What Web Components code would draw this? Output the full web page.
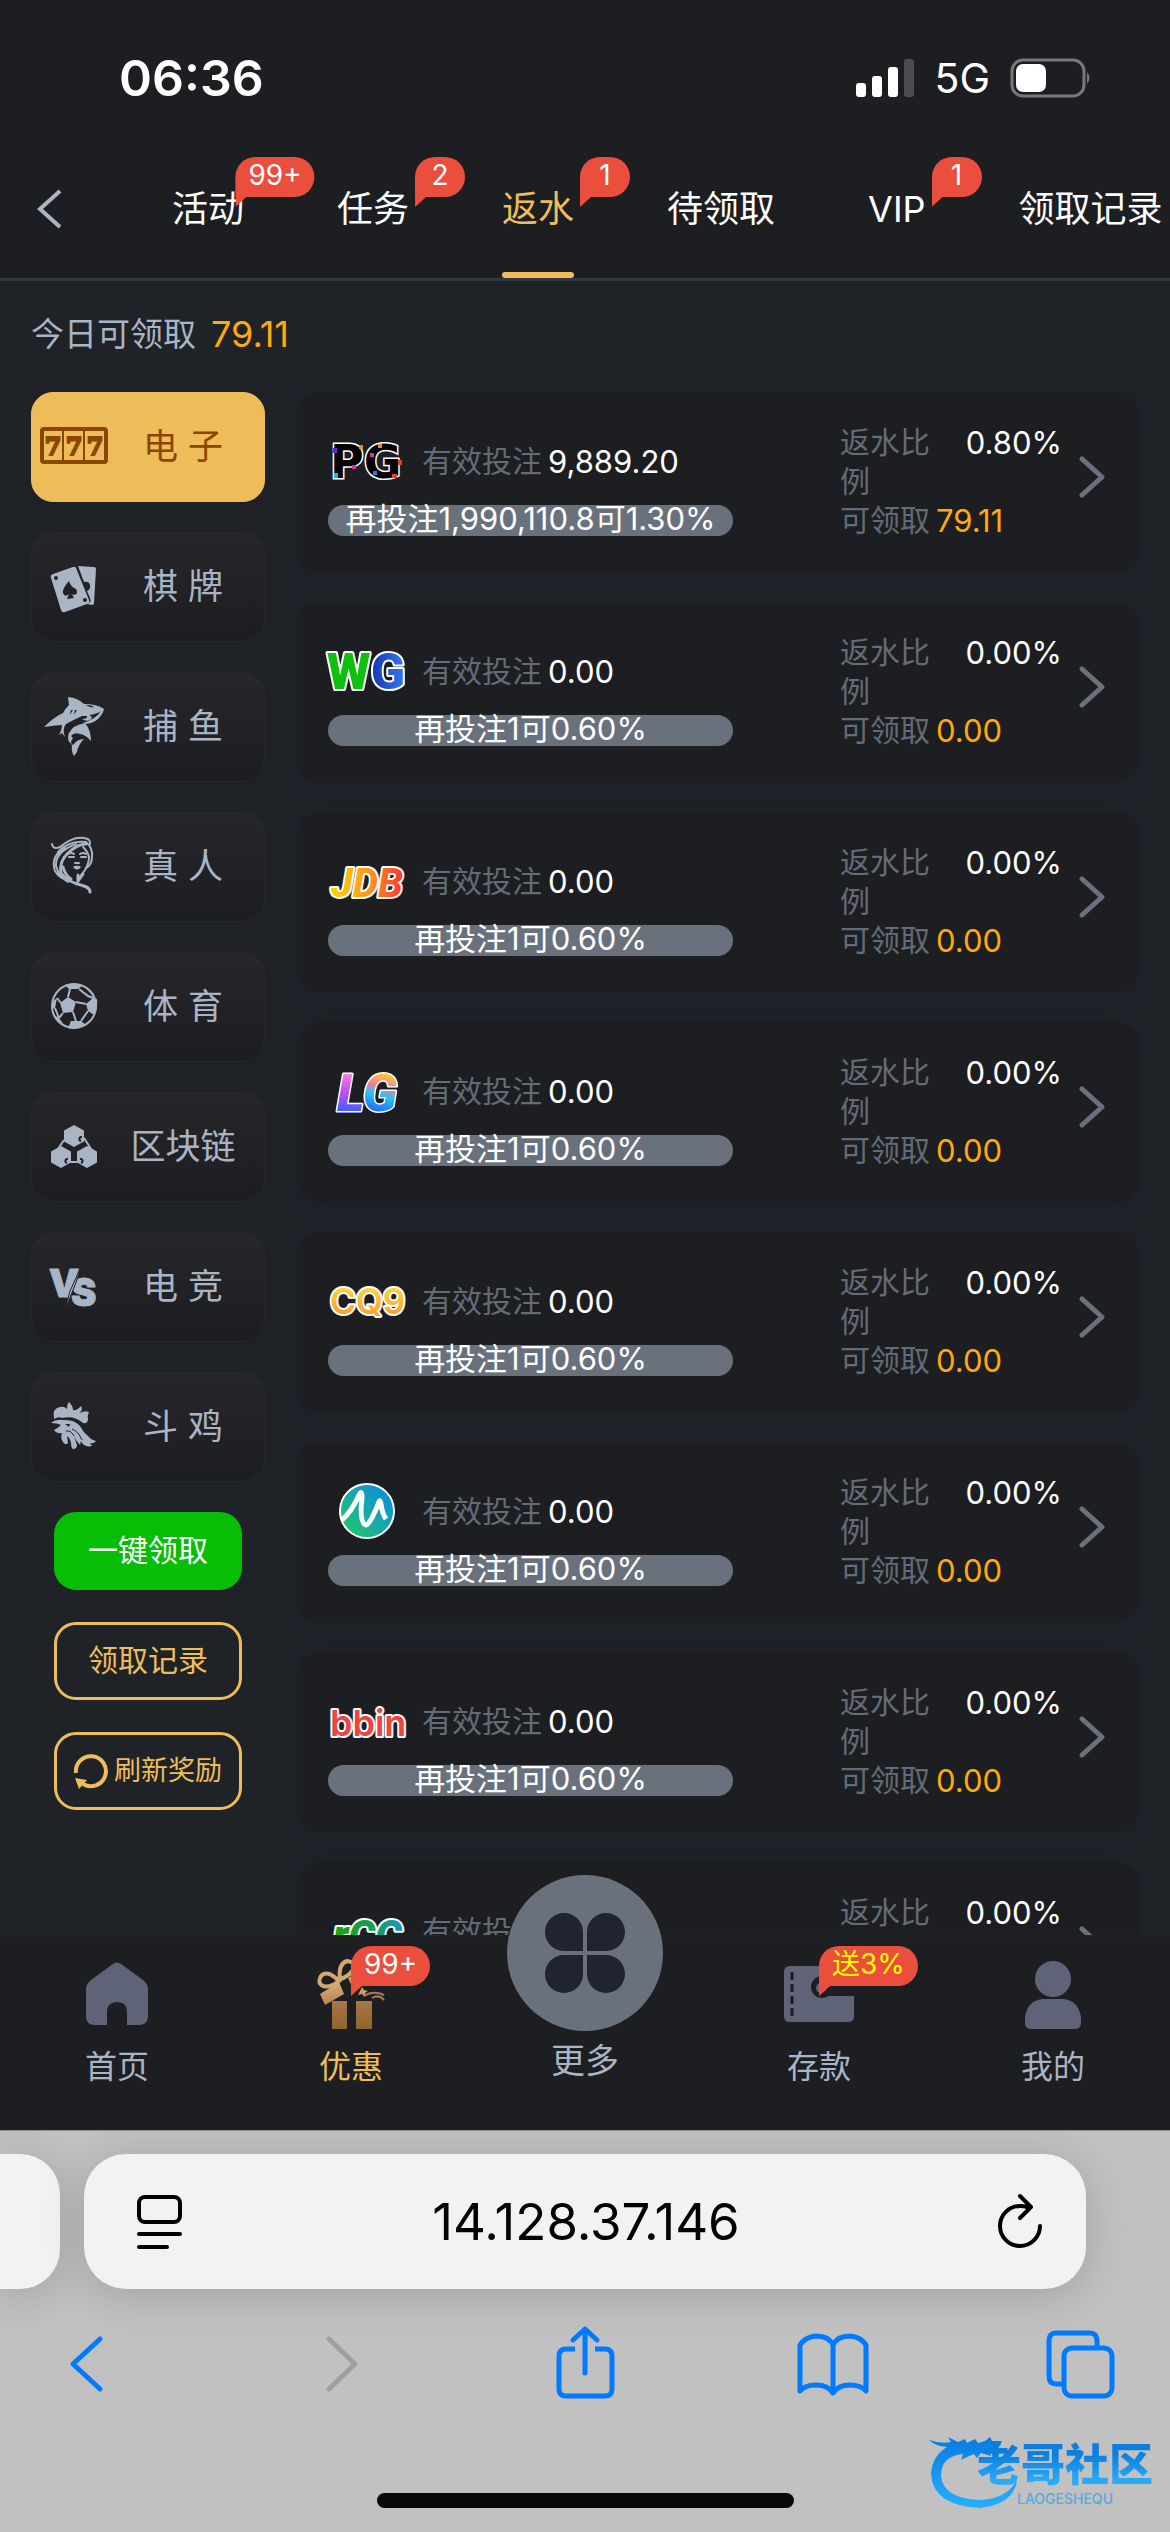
<!DOCTYPE html>
<html lang="zh-CN">
<head>
<meta charset="utf-8">
<meta name="viewport" content="width=device-width, initial-scale=1">
<title>返水</title>
<style>
  :root {
    --page: #1f2227;
    --panel: #1d1e22;
    --card: #1d1e21;
    --line: #303844;
    --muted: #636b77;
    --soft: #a9b4c4;
    --gold: #eebd5a;
    --amber: #ffaa09;
    --pill: #69717d;
    --badge: #ea4e3d;
    --safari-blue: #007aff;
  }
  body {
    margin: 0;
    background: var(--page);
    color: #fff;
    font-family: Inter, "Noto Sans CJK SC", sans-serif;
  }
</style>
</head>
<body>
<promo-app></promo-app>

<script>
// Attaches an open shadow root filled from a template string
class BaseElement extends HTMLElement {
  constructor() {
    super();
    this.attachShadow({ mode: 'open' });
  }

  connectedCallback() {
    const template = document.createElement('template');
    template.innerHTML = BASE_CSS + this.render();
    this.shadowRoot.replaceChildren(template.content.cloneNode(true));
  }
}

const BASE_CSS = `
<style>
  * { box-sizing: border-box; }
  button, a, input { font: inherit; color: inherit; }
  button { border: 0; padding: 0; margin: 0; background: none; }
  a { text-decoration: none; }
  svg { display: block; overflow: visible; }
</style>`;

/* ── Category icons, 68 x 68 ── */
const CATEGORY_ICONS = {
  slots: `<svg viewBox="0 0 68 68">
    <rect x="2" y="17" width="64" height="33" rx="2" fill="none" stroke="currentColor" stroke-width="4"/>
    <path d="M23 18V49M44 18V49" stroke="currentColor" stroke-width="2"/>
    <g font-family="DejaVu Serif, serif" font-weight="700" font-size="24" text-anchor="middle" fill="currentColor" stroke="currentColor" stroke-width="2">
      <text x="13" y="43">7</text><text x="34" y="43">7</text><text x="55" y="43">7</text>
    </g></svg>`,
  cards: `<svg viewBox="0 0 68 68" fill="currentColor">
    <path d="M38 14L54 15Q56 15 56 17L54 51Q54 53 52 53L47 52L50 50Q51 49 50 46L47 39Q51 37 50 33Q49 29 44 30Z"/>
    <path fill-rule="evenodd" d="M13 22L33 15Q35 14 36 16L49 48Q50 51 47 52L25 60Q22 61 21 58L11 26Q10 23 13 22ZM14 26A2 2 0 1 0 18 26A2 2 0 1 0 14 26ZM43 48A2 2 0 1 0 47 48A2 2 0 1 0 43 48ZM29 29Q30 34 36 37Q39 42 34 43Q32 43 31 41L34 46L27 47L29 42Q25 46 23 41Q22 37 29 29Z"/></svg>`,
  shark: `<svg viewBox="0 0 68 68" fill="currentColor">
    <path fill-rule="evenodd" d="M28 5Q38 6 44 12Q57 12 64 17Q63 22 58 27Q54 31 46 32L43 31Q56 27 61 19Q57 22 49 23Q54 25 50 28Q46 30 42 27Q48 27 47 24L42 24Q33 28 26 32Q22 37 25 45L22 41L19 43Q22 38 22 33Q17 33 4 35Q14 25 23 21Q25 17 29 13ZM46 13Q50 16 54 15Q52 13 46 13ZM31 18L30 23L33 18ZM35 18L34 23L37 18Z"/>
    <path d="M45 31Q51 38 51 49Q46 43 40 42Q34 40 31 44L33 46Q29 51 33 53Q37 47 44 47Q38 53 37 60L34 64Q31 60 32 53Q26 48 29 41Q33 33 45 31Z"/></svg>`,
  lady: `<svg viewBox="0 0 68 68" fill="none" stroke="currentColor" stroke-linecap="round">
    <path d="M12 12Q13 18 20 15Q33 4 44 6Q51 7 50 12" stroke-width="2"/>
    <path d="M18 20Q29 8 46 10Q53 16 52 25Q52 33 46 36" stroke-width="2"/>
    <path d="M46 12Q37 12 27 22Q19 30 21 41Q27 50 44 54Q50 56 50 60" stroke-width="3"/>
    <path d="M36 12Q15 20 16 34Q19 45 28 50M25 16Q10 24 15 39Q18 44 22 46M43 15Q48 20 49 25Q49 31 45 38L39 46" stroke-width="2"/>
    <path d="M23 35Q25 43 31 47M38 43V49L43 42" stroke-width="3"/>
    <path d="M28 22Q31 20 34 22M40 22Q43 20 46 22M29 25H34M41 25H46M35 31H39" stroke-width="2"/>
    <path d="M33 35Q36 33 37 34Q39 33 41 35Q37 40 33 35Z" fill="currentColor" stroke="none"/></svg>`,
  ball: `<svg viewBox="0 0 68 68" fill="currentColor">
    <circle cx="34" cy="34" r="22" fill="none" stroke="currentColor" stroke-width="2"/>
    <path d="M28 25L36 30L33 40L23 41L20 31Z"/>
    <path d="M25 13Q34 10 42 14L38 17L29 17ZM57 27Q58 36 54 43L48 39L46 32L53 26ZM28 56L31 49L41 49L46 53Q38 58 28 56ZM12 30L17 26L15 36L12 37ZM46 15Q53 20 55 24Q48 20 46 15ZM14 43L19 46L24 53Q17 50 14 43Z"/>
    <path d="M28 25L30 17M17 26L21 31M36 30L46 32M33 40L36 49M23 41L19 46M41 49L48 39M39 17L48 24L53 26M15 36L19 46" fill="none" stroke="currentColor" stroke-width="2"/></svg>`,
  chain: `<svg viewBox="0 0 68 68">
    <path d="M24 28L14 43M44 26L53 40M28 50H40" stroke="currentColor" stroke-width="2"/>
    <g fill="currentColor" stroke="currentColor" stroke-width="2" stroke-linejoin="round">
      <path d="M34 14L43 19V29L34 34L25 29V19Z"/><path d="M21 35L30 40V50L21 55L12 50V40Z"/><path d="M47 35L56 40V50L47 55L38 50V40Z"/>
    </g>
    <g fill="none" stroke="var(--panel)" stroke-width="2"><path d="M41 29A2 2 0 1 1 42 25"/><path d="M27 51A2 2 0 1 1 28 47"/><path d="M41 51A2 2 0 1 0 40 47"/></g></svg>`,
  versus: `<svg viewBox="0 0 68 68" fill="currentColor">
    <g font-family="Inter, sans-serif" font-weight="900" font-size="38" stroke="currentColor">
      <text x="9" y="45">V</text><text x="31" y="54">S</text>
    </g>
    <path d="M43 11L35 33L24 61L30 39Z" stroke="var(--panel)" stroke-width="1"/></svg>`,
  rooster: `<svg viewBox="0 0 68 68" fill="currentColor">
    <path d="M14 27Q12 16 20 15Q24 14 27 17Q27 12 29 10Q33 14 33 18Q37 19 41 14Q43 17 40 21Q45 18 49 20Q47 24 48 27Q48 32 43 31Q34 23 22 26Q19 24 14 27Z"/>
    <path fill-rule="evenodd" d="M11 31Q16 27 23 28Q34 27 40 34Q43 40 48 44Q51 48 56 49Q54 52 50 51L52 54Q44 56 41 49L40 53Q36 49 34 44L37 53Q37 57 33 57Q31 56 31 51Q30 46 27 44L28 51Q26 54 23 50Q20 46 22 41Q17 42 14 38Q18 36 21 33Q17 31 11 31ZM25 32L29 35L30 32Z"/>
    <path d="M26 39Q31 38 34 44M32 37Q38 39 42 48" fill="none" stroke="var(--panel)" stroke-width="1"/></svg>`
};

/* ── Provider logos, 78 x 76 ── */
const PROVIDER_LOGOS = {
  pg: `<text x="2" y="55" font-family="DejaVu Sans, sans-serif" font-weight="700" font-size="46" fill="#000" stroke="#fff" stroke-width="3" paint-order="stroke">PG</text>
    <path fill="#e98a22" d="M31 22h4v4h-4zM50 21h4v4h-4z"/><path fill="#6d1fd8" d="M5 25h4v5h-4z"/><path fill="#19b7e6" d="M6 50h4v5h-4z"/>
    <path fill="#e02fa0" d="M24 42h4v4h-4zM42 30h4v4h-4z"/><path fill="#ef3b24" d="M70 37h4v5h-4zM64 51h5v4h-5z"/><path fill="#227fe0" d="M45 48h4v4h-4z"/>`,
  wg: `<g font-family="Roboto, sans-serif" font-weight="900" font-size="50" stroke="#fff" stroke-width="4" stroke-linejoin="round" paint-order="stroke">
      <text x="43" y="56" fill="url(#wgBlue)">G</text><text x="-1" y="56" fill="#0fc00e">W</text></g>
    <linearGradient id="wgBlue"><stop stop-color="#1436b4"/><stop offset="1" stop-color="#3279f3"/></linearGradient>`,
  jdb: `<text x="3" y="54" font-family="Roboto, sans-serif" font-style="italic" font-weight="800" font-size="40" fill="url(#jdb)" stroke="#fff" stroke-width="4" stroke-linejoin="round" paint-order="stroke">JDB</text>
    <linearGradient id="jdb"><stop stop-color="#ffd400"/><stop offset=".5" stop-color="#ff9c18"/><stop offset="1" stop-color="#ff3834"/></linearGradient>`,
  lg: `<text x="9" y="58" font-family="Roboto, sans-serif" font-style="italic" font-weight="900" font-size="52" stroke="#fff" stroke-width="3" stroke-linejoin="round" paint-order="stroke"><tspan fill="url(#lgA)">L</tspan><tspan fill="url(#lgB)">G</tspan></text>
    <linearGradient id="lgA" gradientUnits="userSpaceOnUse" x1="0" y1="20" x2="0" y2="58"><stop stop-color="#ff7ce8"/><stop offset=".5" stop-color="#c04df0"/><stop offset="1" stop-color="#4360ff"/></linearGradient>
    <linearGradient id="lgB" gradientUnits="userSpaceOnUse" x1="60" y1="20" x2="50" y2="58"><stop stop-color="#ffd02c"/><stop offset=".4" stop-color="#ee7ca0"/><stop offset=".6" stop-color="#20c8f6"/><stop offset="1" stop-color="#2a6cf6"/></linearGradient>`,
  cq9: `<text x="2" y="51" font-family="Inter, sans-serif" font-weight="600" font-size="35" fill="url(#cq)" stroke="#fff" stroke-width="4" stroke-linejoin="round" paint-order="stroke">CQ9</text>
    <linearGradient id="cq" x2="0" y2="1"><stop offset=".2" stop-color="#ffd23a"/><stop offset="1" stop-color="#ff8f32"/></linearGradient>`,
  mg: `<circle cx="39" cy="38" r="27" fill="url(#mg)" stroke="#fff" stroke-width="2"/>
    <path d="M14 47Q24 38 31 22Q34 16 34 25Q31 50 38 52Q42 52 51 29Q52 26 53 31Q54 40 58 46" fill="none" stroke="#fff" stroke-width="5" stroke-linejoin="round"/>
    <linearGradient id="mg" x1="1" x2="0" y2="1"><stop stop-color="#0787e8"/><stop offset=".5" stop-color="#17a8a8"/><stop offset="1" stop-color="#25cf5b"/></linearGradient>`,
  bbin: `<text x="2" y="53" font-family="Inter, sans-serif" font-weight="600" font-size="36" fill="#ee4340" stroke="#fff" stroke-width="4" stroke-linejoin="round" paint-order="stroke">bbin</text>`,
  rcc: `<text x="5" y="57" font-family="Roboto, sans-serif" font-style="italic" font-weight="900" font-size="42" fill="url(#rcc)" stroke="#fff" stroke-width="4" stroke-linejoin="round" paint-order="stroke">rCC</text>
    <linearGradient id="rcc"><stop offset=".1" stop-color="#16a80d"/><stop offset=".5" stop-color="#12a052"/><stop offset="1" stop-color="#1797b8"/></linearGradient>`
};

/* ── Bottom navigation icons, 72 x 72 ── */
const NAV_ICONS = {
  home: `<svg viewBox="0 0 72 72" fill="#5f6378"><path d="M32 6Q36 3 40 6L62 22Q67 26 67 31V58Q67 67 58 67H46V54Q46 44 36 44Q26 44 26 54V67H14Q5 67 5 58V31Q5 26 10 22Z"/></svg>`,
  gift: `<svg viewBox="0 0 72 72">
    <linearGradient id="lid" x2="0" y2="1"><stop stop-color="#d9ad77"/><stop offset="1" stop-color="#b98256"/></linearGradient>
    <linearGradient id="box" x2="0" y2="1"><stop stop-color="#a8784a"/><stop offset="1" stop-color="#8f642a"/></linearGradient>
    <g fill="none" stroke="#d4a76f" stroke-width="4"><path d="M24 23Q12 11 6 18Q2 25 8 28Q15 30 24 23Z"/><path d="M25 21Q23 6 32 3Q42 4 38 12Q33 19 25 21Z"/></g>
    <path d="M5 36L24 24L29 36L10 47Z" fill="url(#lid)"/><path d="M33 20L45 14L49 26L39 33Z" fill="url(#lid)"/>
    <path d="M17 43H32V71H17ZM41 43H57V71H41Z" fill="url(#box)"/>
    <path d="M49 38Q58 32 69 37M57 40Q64 36 69 42" fill="none" stroke="#a87950" stroke-width="2"/><path d="M47 29L49 32L53 33L50 35L50 39L47 36L43 37L45 33Z" fill="#c99b66"/></svg>`,
  wallet: `<svg viewBox="0 0 72 72"><path d="M7 8H65Q71 8 71 14V24H47Q36 26 36 31Q36 37 47 38H71V58Q71 64 65 64H7Q1 64 1 58V14Q1 8 7 8Z" fill="#5f6378"/><circle cx="39" cy="29" r="11" fill="#1d1e22"/><path d="M36 24H72V38H41Z" fill="#1d1e22"/><circle cx="38" cy="30" r="5" fill="#5f6378"/><path d="M9 14V60" stroke="#1d1e22" stroke-width="3" stroke-dasharray="8 4"/></svg>`,
  user: `<svg viewBox="0 0 72 72" fill="#5f6378"><circle cx="36" cy="21" r="18"/><path d="M25 41H47Q62 43 64 60V65Q64 71 57 71H15Q8 71 8 65V60Q10 43 25 41Z"/></svg>`,
  more: `<svg viewBox="0 0 80 80" fill="#1f242e"><path d="M19 0A19 19 0 0 1 38 19V38H19A19 19 0 0 1 19 0ZM61 0A19 19 0 0 1 61 38H42V19A19 19 0 0 1 61 0ZM19 42H38V61A19 19 0 1 1 19 42ZM42 42H61A19 19 0 1 1 42 61Z"/></svg>`
};

class StatusBar extends BaseElement {
  render() {
    return `
<style>
  :host { display: flex; align-items: center; gap: 20px; padding: 52px 78px 32px 119px; background: var(--panel); }
  time { flex: 1; font-size: 50px; font-weight: 600; line-height: 52px; }
  .net { font-size: 41px; line-height: 52px; }
  .signal { width: 58px; height: 38px; }
  .battery { width: 82px; height: 40px; }
</style>
<time>06:36</time>
<svg class="signal" viewBox="0 0 58 38" fill="#fff"><rect y="24" width="10" height="14" rx="3"/><rect x="16" y="17" width="10" height="21" rx="3"/><rect x="32" y="8" width="10" height="30" rx="3"/><rect x="48" width="10" height="38" rx="3" fill="#4b4c50"/></svg>
<span class="net">5G</span>
<svg class="battery" viewBox="0 0 82 40"><rect x="2" y="2" width="72" height="36" rx="11" fill="none" stroke="#77787b" stroke-width="3"/><rect x="6" y="6" width="30" height="28" rx="7" fill="#fff"/><path d="M77 14Q82 20 77 26Z" fill="#77787b"/></svg>`;
  }
}
customElements.define('status-bar', StatusBar);

class TipBadge extends BaseElement {
  render() {
    return `
<style>
  :host { position: absolute; padding: 0 13px; min-width: 50px; height: 40px; background: var(--badge); color: #fff; border-radius: 20px 20px 20px 0; font-size: 28px; line-height: 36px; text-align: center; white-space: nowrap; }
  :host([tone="gift"]) { color: #fffb00; }
  :host::after { content: ""; position: absolute; left: 0; top: 100%; width: 11px; height: 10px; background: var(--badge); clip-path: polygon(0 0, 100% 0, 0 100%); }
</style>
<slot></slot>`;
  }
}
customElements.define('tip-badge', TipBadge);

class PromoTabs extends BaseElement {
  render() {
    const tabs = [['活动', '99+'], ['任务', '2'], ['返水', '1', true], ['待领取'], ['VIP', '1'], ['领取记录']];
    return `
<style>
  :host { display: flex; background: var(--panel); border-bottom: 3px solid var(--line); height: 145px; overflow: hidden; }
  .back { display: flex; align-items: center; padding: 4px 111px 0 37px; }
  .back svg { width: 24px; height: 38px; }
  nav { display: flex; gap: 93px; }
  a { position: relative; display: flex; align-items: center; padding-top: 10px; font-size: 36px; line-height: 48px; white-space: nowrap; border-bottom: 6px solid transparent; }
  a[aria-current] { color: var(--gold); }
  a[aria-current]::after { content: ""; position: absolute; left: 0; right: 0; bottom: -6px; height: 6px; border-radius: 3px; background: var(--gold); }
  tip-badge { top: 21px; left: calc(100% + 31px); transform: translateX(-50%); }
</style>
<button class="back" aria-label="返回"><svg viewBox="0 0 24 38"><path d="M23 1L3 19L23 37" fill="none" stroke="var(--soft)" stroke-width="4"/></svg></button>
<nav>${tabs.map(([label, tip, on]) => `<a href="#"${on ? ' aria-current="page"' : ''}>${label}${tip ? `<tip-badge>${tip}</tip-badge>` : ''}</a>`).join('')}</nav>`;
  }
}
customElements.define('promo-tabs', PromoTabs);

class CategoryButton extends BaseElement {
  render() {
    return `
<style>
  :host { display: block; }
  button { display: flex; align-items: center; width: 100%; height: 110px; padding: 0 6px 2px 8px; border: 1px solid #28292d; border-radius: 22px; background: linear-gradient(#27272b, #1c1d20); box-shadow: 0 4px 8px rgba(0, 0, 0, .06); color: var(--soft); font-size: 35px; }
  :host([selected]) button { background: var(--gold); border-color: var(--gold); color: #8b4600; }
  svg { width: 68px; height: 68px; }
  span { flex: 1; padding-bottom: 5px; text-align: center; white-space: pre; }
</style>
<button>${CATEGORY_ICONS[this.getAttribute('icon')]}<span><slot></slot></span></button>`;
  }
}
customElements.define('category-button', CategoryButton);

class ActionButton extends BaseElement {
  render() {
    const refresh = this.hasAttribute('refresh')
      ? `<svg viewBox="0 0 34 34"><path d="M2 19A15 15 0 1 1 9 30" fill="none" stroke="currentColor" stroke-width="4"/><path d="M1 24L13 26L5 35Z" fill="currentColor"/></svg>` : '';
    return `
<style>
  :host { display: block; }
  button { display: flex; align-items: center; justify-content: center; gap: 6px; width: 100%; height: 78px; border: 3px solid var(--gold); border-radius: 22px; color: var(--gold); font-size: 30px; white-space: nowrap; }
  :host([primary]) button { background: #08bd05; border-color: #08bd05; color: #fff; }
  :host([refresh]) button { font-size: 27px; }
  svg { width: 34px; height: 34px; }
  span { padding-bottom: 6px; }
</style>
<button>${refresh}<span><slot></slot></span></button>`;
  }
}
customElements.define('action-button', ActionButton);

class SideMenu extends BaseElement {
  render() {
    const items = [['slots', '电 子'], ['cards', '棋 牌'], ['shark', '捕 鱼'], ['lady', '真 人'], ['ball', '体 育'], ['chain', '区块链'], ['versus', '电 竞'], ['rooster', '斗 鸡']];
    return `
<style>
  :host { display: flex; flex-direction: column; gap: 30px; }
  .actions { display: flex; flex-direction: column; gap: 32px; padding: 0 23px; }
</style>
${items.map(([icon, label], i) => `<category-button icon="${icon}"${i ? '' : ' selected'}>${label}</category-button>`).join('')}
<div class="actions">
  <action-button primary>一键领取</action-button>
  <action-button>领取记录</action-button>
  <action-button refresh>刷新奖励</action-button>
</div>`;
  }
}
customElements.define('side-menu', SideMenu);

class RebateCard extends BaseElement {
  render() {
    const get = name => this.getAttribute(name);
    return `
<style>
  :host { display: flex; align-items: flex-start; height: 180px; padding: 31px 33px 42px 31px; border-radius: 22px; background: var(--card); box-shadow: 0 6px 16px rgba(30, 33, 46, .4); color: var(--muted); font-size: 30px; line-height: 39px; }
  .bet { width: 405px; }
  .line { display: flex; align-items: center; gap: 6px; height: 76px; margin-bottom: 6px; }
  .line svg { width: 78px; height: 76px; margin-right: 10px; }
  b { font-weight: 400; font-size: 31px; color: #fff; }
  .pill { height: 31px; border-radius: 16px; background: var(--pill); color: #fff; font-size: 31px; line-height: 27px; text-align: center; white-space: nowrap; }
  .info { margin-left: auto; width: 222px; }
  .rate, .take { display: flex; justify-content: space-between; }
  .rate span { width: 92px; }
  .take { justify-content: flex-start; gap: 6px; white-space: nowrap; }
  .take b { color: var(--amber); }
  .go { align-self: center; margin-left: 16px; }
  .go svg { width: 28px; height: 42px; }
</style>
<div class="bet">
  <div class="line"><svg viewBox="0 0 78 76" role="img">${PROVIDER_LOGOS[get('logo')]}</svg><span>有效投注</span><b>${get('bet')}</b></div>
  <div class="pill">${get('tip')}</div>
</div>
<div class="info">
  <div class="rate"><span>返水比例</span><b>${get('rate')}</b></div>
  <div class="take"><span>可领取</span><b>${get('amount')}</b></div>
</div>
<button class="go" aria-label="详情"><svg viewBox="0 0 28 42"><path d="M4 3L24 21L4 39" fill="none" stroke="var(--pill)" stroke-width="5" stroke-linecap="round" stroke-linejoin="round"/></svg></button>`;
  }
}
customElements.define('rebate-card', RebateCard);

class RebatePage extends BaseElement {
  render() {
    const rest = ['wg', 'jdb', 'lg', 'cq9', 'mg', 'bbin', 'rcc'];
    return `
<style>
  :host { display: block; flex: 1; min-height: 0; overflow: hidden; padding: 0 31px; }
  p { display: flex; gap: 15px; margin: 0; padding: 28px 0 33px; font-size: 33px; line-height: 50px; color: var(--soft); }
  p b { font-weight: 400; font-size: 36px; color: var(--amber); }
  .cols { display: grid; grid-template-columns: 234px 1fr; gap: 32px; align-items: start; }
  .list { display: flex; flex-direction: column; gap: 30px; }
</style>
<p>今日可领取<b>79.11</b></p>
<div class="cols">
  <side-menu></side-menu>
  <div class="list">
    <rebate-card logo="pg" bet="9,889.20" tip="再投注1,990,110.8可1.30%" rate="0.80%" amount="79.11"></rebate-card>
    ${rest.map(logo => `<rebate-card logo="${logo}" bet="0.00" tip="再投注1可0.60%" rate="0.00%" amount="0.00"></rebate-card>`).join('')}
  </div>
</div>`;
  }
}
customElements.define('rebate-page', RebatePage);

class NavItem extends BaseElement {
  render() {
    const tip = this.getAttribute('tip');
    const tone = this.getAttribute('tone') || '';
    return `
<style>
  :host { display: block; flex: 1; }
  a { position: relative; display: flex; flex-direction: column; align-items: center; gap: 17px; padding: 23px 0 43px; color: var(--soft); font-size: 32px; line-height: 40px; }
  :host([active]) a { color: var(--gold); }
  .icon svg { width: 72px; height: 72px; }
  tip-badge { left: 50%; top: 11px; }
  /* raised round button */
  :host([raised]) a { padding-top: 0; gap: 10px; font-size: 34px; }
  :host([raised]) .icon { display: grid; place-items: center; width: 156px; height: 156px; margin-top: -60px; border-radius: 50%; background: var(--pill); }
  :host([raised]) svg { width: 80px; height: 80px; }
</style>
<a href="#"><span class="icon">${NAV_ICONS[this.getAttribute('icon')]}</span><slot></slot>${tip ? `<tip-badge tone="${tone}">${tip}</tip-badge>` : ''}</a>`;
  }
}
customElements.define('nav-item', NavItem);

class BottomNav extends BaseElement {
  render() {
    return `
<style>
  :host { display: flex; position: relative; background: var(--panel); box-shadow: inset 0 2px #222327; }
</style>
<nav-item icon="home">首页</nav-item>
<nav-item icon="gift" tip="99+" active>优惠</nav-item>
<nav-item icon="more" raised>更多</nav-item>
<nav-item icon="wallet" tip="送3%" tone="gift">存款</nav-item>
<nav-item icon="user">我的</nav-item>`;
  }
}
customElements.define('bottom-nav', BottomNav);

class CommunityMark extends BaseElement {
  render() {
    return `
<style>
  :host { position: absolute; right: 17px; bottom: 24px; display: flex; align-items: center; color: #1a92ea; }
  svg { width: 94px; height: 72px; margin-right: -46px; }
  div { display: flex; flex-direction: column; align-items: center; gap: 1px; }
  strong { font-size: 44px; font-weight: 900; line-height: 52px; background: linear-gradient(#0b7fe0 30%, #29abf8 80%); background-clip: text; color: transparent; }
  small { font-size: 14px; font-weight: 500; line-height: 14px; color: #5aa9dc; }
</style>
<svg viewBox="0 0 94 72">
  <linearGradient id="dragon" x2="0" y2="1"><stop stop-color="#087be0"/><stop offset="1" stop-color="#27b0ff"/></linearGradient>
  <path fill="url(#dragon)" d="M0 4Q12 8 22 6L19 1L29 6L36 3L38 7L46 3L49 7L56 5L61 1L63 5L73 5L71 10H65L71 14L70 18L61 15L62 20L52 17L48 22L45 18L38 21L32 24L34 18Q12 20 12 40Q14 62 50 64Q78 63 88 44Q85 68 51 72Q4 70 2 38Q3 20 18 11Q6 10 0 4Z"/>
</svg>
<div><strong>老哥社区</strong><small>LAOGESHEQU</small></div>`;
  }
}
customElements.define('community-mark', CommunityMark);

class BrowserBar extends BaseElement {
  render() {
    return `
<style>
  :host { display: block; position: relative; background: #c1c1c1; border-top: 1px solid #8f8f92; padding: 23px 0 24px; overflow: hidden; }
  .tabs { display: flex; gap: 24px; padding-right: 84px; }
  .prev, .address { height: 135px; background: #f2f2f2; box-shadow: 0 6px 44px rgba(0, 0, 0, .16); }
  .prev { width: 60px; border-radius: 0 40px 40px 0; }
  .address { flex: 1; display: flex; align-items: center; justify-content: space-between; padding: 0 42px 0 52px; border-radius: 42px; color: #000; }
  input { flex: 1; min-width: 0; border: 0; padding: 0 8px 0 0; background: none; text-align: center; font-size: 51px; line-height: 64px; }
  .address svg { width: 48px; height: 56px; }
  .tools { display: flex; justify-content: space-between; padding: 38px 54px 0 51px; color: var(--safari-blue); }
  .tools button { display: flex; justify-content: center; align-items: center; width: 72px; height: 74px; }
  .tools svg { width: 72px; height: 74px; fill: none; stroke: currentColor; stroke-width: 5; stroke-linecap: round; stroke-linejoin: round; }
  .tools [disabled] { color: #a0a0a0; }
  .handle { width: 417px; height: 15px; margin: 92px auto 0; border-radius: 8px; background: #0a0a0a; }
</style>
<div class="tabs">
  <div class="prev"></div>
  <div class="address">
    <button aria-label="阅读器"><svg viewBox="0 0 48 56" fill="none" stroke="currentColor" stroke-width="4" stroke-linecap="round"><rect x="3" y="3" width="41" height="25" rx="6"/><path d="M3 40H44M3 53H31"/></svg></button>
    <input type="text" value="14.128.37.146" aria-label="网址">
    <button aria-label="重新载入"><svg viewBox="0 0 48 56" fill="none" stroke="currentColor" stroke-width="4" stroke-linecap="round" stroke-linejoin="round"><path d="M31 13Q28 12 24 12A20 20 0 1 0 44 32M24 2L35 13L24 24"/></svg></button>
  </div>
</div>
<div class="tools">
  <button aria-label="后退"><svg viewBox="0 0 72 74"><path d="M49 12L22 37L49 62"/></svg></button>
  <button aria-label="前进" disabled><svg viewBox="0 0 72 74"><path d="M30 12L56 37L30 62"/></svg></button>
  <button aria-label="分享"><svg viewBox="0 0 72 74"><path d="M27 22H18Q11 22 11 29V62Q11 69 18 69H57Q64 69 64 62V29Q64 22 57 22H47" stroke-linecap="butt"/><path d="M37 46V3M25 13L37 2L49 13"/></svg></button>
  <button aria-label="书签"><svg viewBox="0 0 72 74"><path d="M37 18Q33 9 20 9Q9 10 4 18V64Q9 58 20 58Q32 58 37 66Q42 58 54 58Q65 58 70 64V18Q65 10 54 9Q41 9 37 18V66"/></svg></button>
  <button aria-label="标签页"><svg viewBox="0 0 72 74"><path d="M17 57H12Q5 57 5 49V14Q5 6 12 6H46Q53 6 53 14V20"/><rect x="20" y="21" width="48" height="48" rx="8"/></svg></button>
</div>
<div class="handle"></div>
<community-mark></community-mark>`;
  }
}
customElements.define('browser-bar', BrowserBar);

class PromoApp extends BaseElement {
  render() {
    return `
<style>
  :host { display: flex; flex-direction: column; height: 100vh; overflow: hidden; }
</style>
<status-bar></status-bar>
<promo-tabs></promo-tabs>
<rebate-page></rebate-page>
<bottom-nav></bottom-nav>
<browser-bar></browser-bar>`;
  }
}
customElements.define('promo-app', PromoApp);
</script>
</body>
</html>
